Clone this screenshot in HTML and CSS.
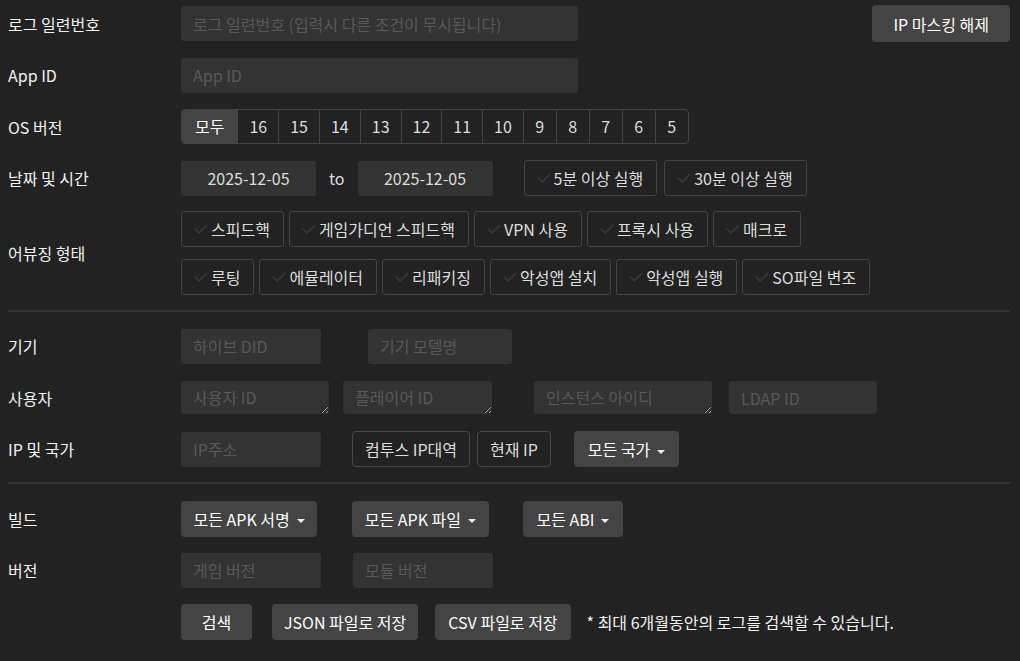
FILE: index.html
```html
<!DOCTYPE html>
<html>
  <head>
    <title>로그 검색</title>
    <link rel="stylesheet" href="styles.css">
  </head>
  <body>
    <form class="search">
      <div class="row">
        <label class="lbl">로그 일련번호</label>
        <input class="field serial" placeholder="로그 일련번호 (입력시 다른 조건이 무시됩니다)">
        <button type="button" class="btn mask">IP 마스킹 해제</button>
      </div>

      <div class="row">
        <label class="lbl">App ID</label>
        <input class="field serial" placeholder="App ID">
      </div>

      <div class="row">
        <label class="lbl">OS 버전</label>
        <div class="seg">
          <span class="on">모두</span>
          <span>16</span>
          <span>15</span>
          <span>14</span>
          <span>13</span>
          <span>12</span>
          <span>11</span>
          <span>10</span>
          <span>9</span>
          <span>8</span>
          <span>7</span>
          <span>6</span>
          <span>5</span>
        </div>
      </div>

      <div class="row">
        <label class="lbl">날짜 및 시간</label>
        <input class="field date" value="2025-12-05">
        <span class="to">to</span>
        <input class="field date" value="2025-12-05">
        <label class="chip run5"><svg class="tick" viewBox="0 0 14 10"><polyline points="1,4.5 5,9 13,1"/></svg>5분 이상 실행</label>
        <label class="chip run30"><svg class="tick" viewBox="0 0 14 10"><polyline points="1,4.5 5,9 13,1"/></svg>30분 이상 실행</label>
      </div>

      <div class="row abuse">
        <label class="lbl">어뷰징 형태</label>
        <div class="chips">
          <div class="chip-line">
            <label class="chip"><svg class="tick" viewBox="0 0 14 10"><polyline points="1,4.5 5,9 13,1"/></svg>스피드핵</label>
            <label class="chip"><svg class="tick" viewBox="0 0 14 10"><polyline points="1,4.5 5,9 13,1"/></svg>게임가디언 스피드핵</label>
            <label class="chip"><svg class="tick" viewBox="0 0 14 10"><polyline points="1,4.5 5,9 13,1"/></svg>VPN 사용</label>
            <label class="chip"><svg class="tick" viewBox="0 0 14 10"><polyline points="1,4.5 5,9 13,1"/></svg>프록시 사용</label>
            <label class="chip"><svg class="tick" viewBox="0 0 14 10"><polyline points="1,4.5 5,9 13,1"/></svg>매크로</label>
          </div>
          <div class="chip-line">
            <label class="chip"><svg class="tick" viewBox="0 0 14 10"><polyline points="1,4.5 5,9 13,1"/></svg>루팅</label>
            <label class="chip"><svg class="tick" viewBox="0 0 14 10"><polyline points="1,4.5 5,9 13,1"/></svg>에뮬레이터</label>
            <label class="chip"><svg class="tick" viewBox="0 0 14 10"><polyline points="1,4.5 5,9 13,1"/></svg>리패키징</label>
            <label class="chip"><svg class="tick" viewBox="0 0 14 10"><polyline points="1,4.5 5,9 13,1"/></svg>악성앱 설치</label>
            <label class="chip"><svg class="tick" viewBox="0 0 14 10"><polyline points="1,4.5 5,9 13,1"/></svg>악성앱 실행</label>
            <label class="chip"><svg class="tick" viewBox="0 0 14 10"><polyline points="1,4.5 5,9 13,1"/></svg>SO파일 변조</label>
          </div>
        </div>
      </div>

      <hr class="sep">

      <div class="row">
        <label class="lbl">기기</label>
        <input class="field did" placeholder="하이브 DID">
        <input class="field model" placeholder="기기 모델명">
      </div>

      <div class="row">
        <label class="lbl">사용자</label>
        <textarea class="field area user-id" placeholder="사용자 ID"></textarea>
        <textarea class="field area player-id" placeholder="플레이어 ID"></textarea>
        <textarea class="field area instance" placeholder="인스턴스 아이디"></textarea>
        <input class="field ldap" placeholder="LDAP ID">
      </div>

      <div class="row">
        <label class="lbl">IP 및 국가</label>
        <input class="field did" placeholder="IP주소">
        <button type="button" class="btn line c2s">컴투스 IP대역</button>
        <button type="button" class="btn line my-ip">현재 IP</button>
        <button type="button" class="btn drop country">모든 국가</button>
      </div>

      <hr class="sep">

      <div class="row">
        <label class="lbl">빌드</label>
        <button type="button" class="btn drop">모든 APK 서명</button>
        <button type="button" class="btn drop apk-file">모든 APK 파일</button>
        <button type="button" class="btn drop abi">모든 ABI</button>
      </div>

      <div class="row">
        <label class="lbl">버전</label>
        <input class="field did" placeholder="게임 버전">
        <input class="field module" placeholder="모듈 버전">
      </div>

      <div class="row">
        <span class="lbl"></span>
        <button type="button" class="btn go">검색</button>
        <button type="button" class="btn json">JSON 파일로 저장</button>
        <button type="button" class="btn csv">CSV 파일로 저장</button>
        <span class="note">* 최대 6개월동안의 로그를 검색할 수 있습니다.</span>
      </div>
    </form>
  </body>
</html>
```

FILE: styles.css
```css
body {
  margin: 0;
  padding: 5px 10px 0 8px;
  background-color: #222;
  color: #eee;
  font-family: "Noto Sans CJK KR", sans-serif;
  font-size: 16px;
  color-scheme: dark;
}

.row {
  display: flex;
  align-items: center;
  height: 37px;
  margin-bottom: 14.5px;
}

.lbl {
  flex: none;
  width: 173px;
  color: #f2f2f2;
}

/* inputs */
.field {
  flex: none;
  box-sizing: border-box;
  height: 35px;
  padding: 0 12px;
  border: none;
  border-radius: 3px;
  background-color: #333;
  color: #ddd;
  font-family: inherit;
  font-size: 16px;
  outline: none;
}

.field::placeholder {
  color: #595959;
}

.serial {
  width: 397px;
}

.date {
  width: 135px;
  text-align: center;
}

.to {
  margin: 0 13px;
  color: #ddd;
}

.did {
  width: 140px;
}

.model {
  width: 144px;
  margin-left: 47px;
}

.module {
  width: 140px;
  margin-left: 32px;
}

.area {
  height: 33px;
  padding: 5px 12px;
  line-height: 22px;
  overflow: hidden;
}

.user-id {
  width: 148px;
}

.player-id {
  width: 149px;
  margin-left: 14px;
}

.instance {
  width: 178px;
  margin-left: 42px;
}

.ldap {
  width: 148px;
  height: 33px;
  margin-left: 17px;
}

/* buttons */
.btn {
  flex: none;
  height: 36px;
  padding: 0 12px;
  border: none;
  border-radius: 4px;
  background-color: #444;
  color: #fff;
  font-family: inherit;
  font-size: 16px;
}

.mask {
  height: 37px;
  margin-left: auto;
  padding: 0 21px;
}

.line {
  border: 1px solid #484848;
  background-color: transparent;
  color: #ddd;
}

.c2s {
  margin-left: 31px;
}

.my-ip {
  margin-left: 7px;
}

.drop {
  padding: 0 12.5px;
}

.drop::after {
  content: "";
  display: inline-block;
  margin-left: 7px;
  vertical-align: middle;
  border-top: 4px solid #eee;
  border-left: 4px solid transparent;
  border-right: 4px solid transparent;
}

.country {
  margin-left: 23px;
  padding: 0 14px;
}

.apk-file {
  margin-left: 35px;
}

.abi {
  margin-left: 34px;
  padding: 0 14px;
}

.go {
  width: 71px;
  padding: 0;
}

.json {
  margin-left: 20px;
}

.csv {
  margin-left: 17px;
  padding: 0 13px;
}

.note {
  margin-left: 16px;
  color: #f2f2f2;
}

/* os version group */
.seg {
  display: flex;
  height: 35px;
  box-sizing: border-box;
  border: 1px solid #444;
  border-radius: 4px;
  overflow: hidden;
}

.seg span {
  box-sizing: border-box;
  min-width: 33px;
  padding: 0 11px;
  line-height: 33px;
  text-align: center;
  border-left: 1px solid #444;
  color: #ddd;
}

.seg span:first-child {
  border-left: none;
}

.seg .on {
  padding: 0 13px;
  background-color: #444;
  color: #fff;
}

/* check chips */
.chip {
  flex: none;
  display: flex;
  align-items: center;
  box-sizing: border-box;
  height: 36px;
  padding: 0 13px 0 12px;
  border: 1px solid #444;
  border-radius: 3px;
  color: #ddd;
}

.tick {
  width: 14px;
  height: 10px;
  margin-right: 3px;
  fill: none;
  stroke: #3a3a3a;
  stroke-width: 1.5;
}

.run5 {
  margin-left: 31px;
}

.run30 {
  margin-left: 7px;
}

.abuse {
  height: auto;
}

.chips {
  display: flex;
  flex-direction: column;
  gap: 12px;
}

.chip-line {
  display: flex;
  gap: 5px;
}

.sep {
  height: 2px;
  margin: 1px 0 16px;
  border: none;
  background-color: #333;
}
```
